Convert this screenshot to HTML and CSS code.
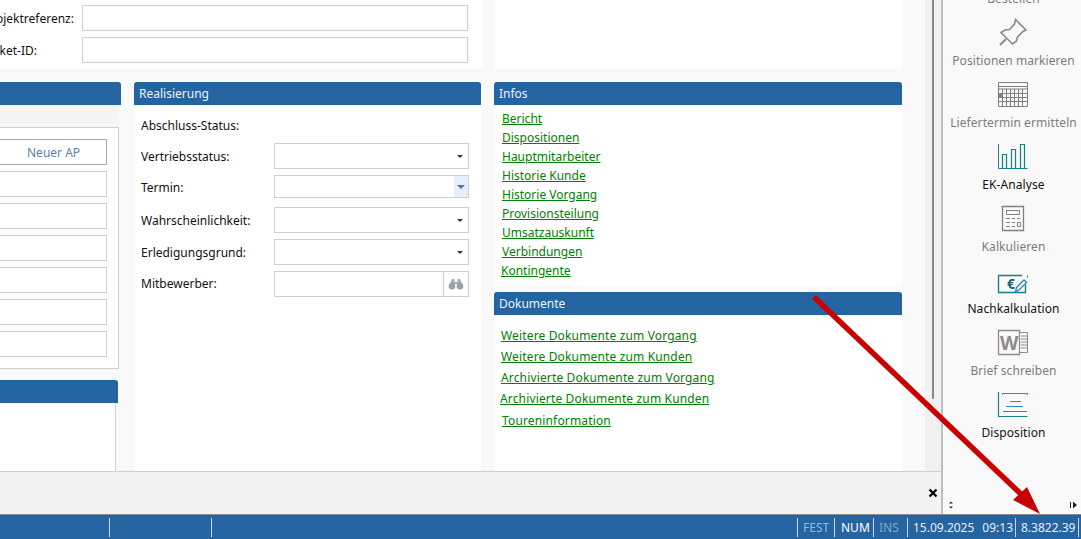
FILE: index.html
```html
<!DOCTYPE html>
<html>
<head>
<meta http-equiv="Content-Type" content="text/html; charset=utf-8" />
  <title>Vorgang</title>
  <link rel="stylesheet" href="styles.css">
</head>
<body>
<div class="app">
  <div class="workspace">
    <div class="main">
      <div class="content">
        <div class="scroll-area">
          <div class="top-row">
            <div class="card top-left">
              <div class="top-field"><span class="top-label">Projektreferenz:</span><input class="field"></div>
              <div class="top-field"><span class="top-label">Ticket-ID:</span><input class="field"></div>
            </div>
            <div class="card top-right"></div>
          </div>
          <div class="panel-row">
            <div class="col-left">
              <div class="panel-head"></div>
              <div class="tabstrip"></div>
              <div class="tabbox">
                <button class="new-btn">Neuer AP</button>
                <input class="field">
                <input class="field">
                <input class="field">
                <input class="field">
                <input class="field">
                <input class="field">
              </div>
              <div class="panel-head second"></div>
              <div class="list-box"></div>
            </div>

            <div class="card col-mid">
              <div class="panel-head">Realisierung</div>
              <div class="form">
                <div class="form-row status-row"><span>Abschluss-Status:</span></div>
                <div class="form-row">
                  <span>Vertriebsstatus:</span>
                  <div class="select"><i class="caret"></i></div>
                </div>
                <div class="form-row termin-row">
                  <span>Termin:</span>
                  <div class="select termin"><b class="termin-btn"><i class="caret blue"></i></b></div>
                </div>
                <div class="form-row">
                  <span>Wahrscheinlichkeit:</span>
                  <div class="select"><i class="caret"></i></div>
                </div>
                <div class="form-row">
                  <span>Erledigungsgrund:</span>
                  <div class="select"><i class="caret"></i></div>
                </div>
                <div class="form-row mitbewerber-row">
                  <span>Mitbewerber:</span>
                  <div class="select search">
                    <b class="search-btn">
                      <svg width="16" height="12" viewBox="0 0 16 12"><path d="M4 1h2.500v3h3V1H12l3 7H9.500V6h-3v2H1z" fill="#aaa"/><circle cx="4" cy="8.300" r="3.300" fill="#98a2a8"/><circle cx="12" cy="8.300" r="3.300" fill="#98a2a8"/></svg>
                    </b>
                  </div>
                </div>
              </div>
            </div>

            <div class="col-right">
              <div class="card infos">
                <div class="panel-head">Infos</div>
                <div class="links">
                  <a href="#">Bericht</a>
                  <a href="#">Dispositionen</a>
                  <a href="#">Hauptmitarbeiter</a>
                  <a href="#">Historie Kunde</a>
                  <a href="#">Historie Vorgang</a>
                  <a href="#">Provisionsteilung</a>
                  <a href="#">Umsatzauskunft</a>
                  <a href="#">Verbindungen</a>
                  <a href="#" class="shift">Kontingente</a>
                </div>
              </div>
              <div class="card docs">
                <div class="panel-head">Dokumente</div>
                <div class="links doc-links">
                  <a href="#">Weitere Dokumente zum Vorgang</a>
                  <a href="#">Weitere Dokumente zum Kunden</a>
                  <a href="#">Archivierte Dokumente zum Vorgang</a>
                  <a href="#" class="shift">Archivierte Dokumente zum Kunden</a>
                  <a href="#" class="last">Toureninformation</a>
                </div>
              </div>
            </div>
          </div>
        </div>
        <div class="scrollbar"><div class="thumb"></div></div>
      </div>
      <div class="bottom-bar">
        <svg class="close" width="10" height="10" viewBox="0 0 10 10"><path d="M1.500 1.500l7 7M8.500 1.500l-7 7" stroke="#000" stroke-width="2.200" fill="none"/></svg>
      </div>
    </div>

    <div class="sidebar">
      <div class="side-list">
        <div class="side-item off">
          <svg width="32" height="32" viewBox="0 0 32 32"></svg>
          <span>Bestellen</span>
        </div>
        <div class="side-item off">
          <svg width="32" height="32" viewBox="0 0 32 32" fill="none" stroke="#8a8a8a" stroke-width="1.600"><path d="M18.500 3.500L29 14l-3 1.500-5.500 5.500-1 4-4 3L4 16.500 8 14l4.500-.5 5-5.500z"/><path d="M9 23l-6 6" stroke-width="2"/></svg>
          <span>Positionen markieren</span>
        </div>
        <div class="side-item off">
          <svg width="32" height="32" viewBox="0 0 32 32" fill="none" stroke="#808080"><path d="M1.500 4.500h29v24h-29zM1.500 8.500h29M1.500 11h29" stroke-width="1"/><path d="M5.500 11v17M9.500 11v17M13.500 11v17M17.500 11v17M21.500 11v17M25.500 11v17M1.500 15.500h29M1.500 19.500h29M1.500 23.500h29" stroke-width="1"/><rect x="2" y="16" width="3" height="3" fill="#808080" stroke="none"/></svg>
          <span>Liefertermin ermitteln</span>
        </div>
        <div class="side-item">
          <svg width="32" height="32" viewBox="0 0 32 32" fill="none" stroke="#1b7f86"><path d="M1.500 4v24.500h29" stroke-width="1"/><path d="M5.500 28V14.500h4V28M14.500 28V9.500h4V28M23.500 28V4.500h4V28" stroke-width="1.200"/></svg>
          <span>EK-Analyse</span>
        </div>
        <div class="side-item off">
          <svg width="32" height="32" viewBox="0 0 32 32" fill="none" stroke="#808080"><path d="M5.500 4.500h21v24h-21z" stroke-width="1.300"/><path d="M9.500 8.500h13v4h-13z"/><path d="M9 16.500h4M15 16.500h3M20 16.500h3M9 20.500h4M15 20.500h3M9 24.500h4M15 24.500h3"/><path d="M20.500 20.500h3v4h-3z"/></svg>
          <span>Kalkulieren</span>
        </div>
        <div class="side-item">
          <svg width="32" height="32" viewBox="0 0 32 32" fill="none"><path d="M25 11.500H1.500v17h27v-8" stroke="#1b7f86" stroke-width="1.400"/><path d="M30.500 11.500v2" stroke="#1b7f86"/><text class="euro" x="10" y="24.500">€</text><path d="M18.500 27.500l1-4L27 16l2.500 2.500-7.500 7.500z" fill="#fff" stroke="#2a7db5" stroke-width="1.300"/></svg>
          <span>Nachkalkulation</span>
        </div>
        <div class="side-item off">
          <svg width="32" height="32" viewBox="0 0 32 32" fill="none" stroke="#8c8c8c"><path d="M1.500 4.500h21v24h-21z" stroke-width="1.300"/><path d="M23 6.500h7.500v20H23M24 10h6M24 13h6M24 16h6M24 19h6M24 22h6"/><text class="word-w" x="3" y="24">W</text></svg>
          <span>Brief schreiben</span>
        </div>
        <div class="side-item">
          <svg width="32" height="32" viewBox="0 0 32 32" fill="none"><path d="M1.500 4v24.500h29" stroke="#1b7f86" stroke-width="1.200"/><path d="M5.500 7V5.500h25V7M13 13.500h11M9 18.500h17M6 23.500h24" stroke="#2a8cc0"/></svg>
          <span>Disposition</span>
        </div>
      </div>
      <div class="side-arrows">
        <svg width="6" height="8" viewBox="0 0 6 8"><path d="M1 2.500h4L3 .5zM1 5.500h4L3 7.500z" fill="#222"/></svg>
        <svg width="8" height="8" viewBox="0 0 8 8"><path d="M.500 1v6" stroke="#222"/><path d="M3 .5v7L7 4z" fill="#222"/></svg>
      </div>
    </div>
  </div>

  <div class="statusbar">
    <div class="st-cell st-a"></div>
    <div class="st-cell st-b"></div>
    <div class="st-cell st-grow"></div>
    <div class="st-cell st-fest">FEST</div>
    <div class="st-cell st-num">NUM</div>
    <div class="st-cell st-ins">INS</div>
    <div class="st-cell st-date">15.09.2025<span class="st-time">09:13</span></div>
    <div class="st-cell st-ver">8.3822.39</div>
  </div>
</div>

<svg class="red-arrow" width="1081" height="539" viewBox="0 0 1081 539">
  <path d="M814 297L1024 497" stroke="#c80000" stroke-width="5.500" fill="none"/>
  <path d="M1040 514L1013 500 1027 487z" fill="#c80000"/>
</svg>
</body>
</html>
```

FILE: styles.css
```css
* {
  box-sizing: border-box;
  margin: 0;
  padding: 0;
}

body {
  width: 1081px;
  height: 539px;
  overflow: hidden;
  position: relative;
  background-color: #f9f9f9;
  font-family: "Noto Sans", "Open Sans", sans-serif;
  font-size: 12px;
  color: #111;
}

.app {
  display: flex;
  flex-direction: column;
  height: 539px;
}

.workspace {
  display: flex;
  height: 515px;
  border-bottom: 1px solid #8a8a8a;
}

.main {
  display: flex;
  flex-direction: column;
  width: 943px;
  border-right: 2px solid #bdbdbd;
}

.content {
  display: flex;
  height: 471px;
  overflow: hidden;
}

.scroll-area {
  flex: none;
  width: 945px;
  margin-left: -20px;
}

.scrollbar {
  flex: 1;
  background-color: #f0f0f0;
}

.thumb {
  width: 2px;
  height: 399px;
  margin-left: 7px;
  background-color: #8a8a8a;
}

.top-row {
  display: flex;
  gap: 11px;
  height: 69px;
}

.card {
  background-color: #fff;
  border-radius: 3px;
}

.top-left {
  width: 503px;
  padding: 5px 15px 0 4px;
}

.top-right {
  width: 408px;
}

.top-field {
  display: flex;
  align-items: center;
  height: 26px;
  margin-bottom: 6px;
}

.top-label {
  width: 98px;
  flex: none;
}

.field {
  display: block;
  flex: none;
  height: 26px;
  width: 386px;
  border: 1px solid #d0d0d0;
  background-color: #fff;
  outline: none;
}

.tabbox .field {
  width: 100%;
  border-left: none;
}

.panel-row {
  display: flex;
  gap: 13px;
  height: 389px;
  margin-top: 13px;
}

.panel-head {
  height: 23px;
  line-height: 23px;
  padding-left: 5px;
  background-color: #2464a0;
  color: #eef3f8;
  border-radius: 3px 3px 0 0;
}

.col-left {
  width: 141px;
  flex: none;
}

.tabstrip {
  height: 22px;
  margin-right: 2px;
  background-color: #f5f5f5;
}

.tabbox {
  display: flex;
  flex-direction: column;
  gap: 6px;
  height: 242px;
  margin-right: 2px;
  padding: 11px 11px 0 0;
  background-color: #fff;
  border: 1px solid #d0d0d0;
  border-left: none;
}

.new-btn {
  height: 26px;
  padding-left: 47px;
  font: inherit;
  color: #5a7fa8;
  text-align: left;
  white-space: nowrap;
  background-color: #fff;
  border: 1px solid #a8a8a8;
  border-left: none;
}

.second {
  margin-top: 11px;
  margin-right: 3px;
}

.list-box {
  height: 68px;
  margin-right: 5px;
  background-color: #fff;
  border-right: 1px solid #d0d0d0;
}

.col-mid {
  width: 347px;
  flex: none;
}

.form {
  padding: 0 12px 0 7px;
}

.form-row {
  display: flex;
  align-items: center;
  justify-content: space-between;
  height: 26px;
  margin-top: 6px;
}

.status-row {
  height: 25px;
  margin-top: 7px;
  padding-top: 2px;
}

.termin-row {
  height: 23px;
  margin-bottom: 9px;
}

.termin-row span {
  padding-top: 2px;
}

.mitbewerber-row span {
  padding-bottom: 2px;
}

.select {
  position: relative;
  display: flex;
  justify-content: flex-end;
  align-items: center;
  width: 195px;
  height: 100%;
  padding-right: 5px;
  background-color: #fff;
  border: 1px solid #d0d0d0;
}

.caret {
  display: block;
  width: 0;
  height: 0;
  border-left: 3px solid transparent;
  border-right: 3px solid transparent;
  border-top: 3px solid #333;
}

.caret.blue {
  border-left-width: 4px;
  border-right-width: 4px;
  border-top: 4px solid #4f78b0;
}

.termin {
  padding-right: 0;
}

.termin-btn {
  display: flex;
  justify-content: center;
  align-items: center;
  width: 14px;
  height: 100%;
  background-color: #e6eef8;
}

.search {
  padding-right: 0;
}

.search-btn {
  display: flex;
  justify-content: center;
  align-items: center;
  width: 25px;
  height: 100%;
  border-left: 1px solid #d0d0d0;
}

.col-right {
  display: flex;
  flex-direction: column;
  gap: 5px;
  width: 408px;
  flex: none;
}

.infos {
  height: 205px;
}

.docs {
  flex: 1;
}

.links {
  display: flex;
  flex-direction: column;
  align-items: flex-start;
  padding: 4px 0 0 8px;
}

.links a {
  color: #008000;
  line-height: 19px;
  text-decoration: underline;
}

.links .shift {
  margin-left: -1px;
}

.doc-links {
  padding: 10px 0 0 7px;
}

.doc-links a {
  line-height: 21px;
  letter-spacing: 0.150px;
}

.doc-links .last {
  margin-left: 1px;
  margin-top: 1px;
}

.bottom-bar {
  display: flex;
  justify-content: flex-end;
  align-items: center;
  flex: 1;
  padding: 0 3px 0 0;
  background-color: #f3f3f3;
  border-top: 1px solid #d0d0d0;
}

.sidebar {
  position: relative;
  flex: 1;
  overflow: hidden;
  background-color: #f9f9f9;
}

.side-list {
  margin-top: -52px;
}

.side-item {
  display: flex;
  flex-direction: column;
  align-items: center;
  height: 62px;
  padding-top: 6px;
  margin-left: 2px;
  color: #111;
}

.side-item.off {
  color: #7c7c7c;
}

.side-item span {
  margin-top: 4px;
  margin-left: 1px;
  line-height: 18px;
  letter-spacing: 0.080px;
  white-space: nowrap;
}

.euro {
  font-size: 14px;
  font-weight: 700;
  fill: #1b5f70;
  stroke: none;
}

.word-w {
  font-size: 19px;
  font-weight: 700;
  fill: #8c8c8c;
  stroke: none;
}

.side-arrows {
  position: absolute;
  left: 5px;
  right: 3px;
  bottom: 5px;
  display: flex;
  justify-content: space-between;
  align-items: center;
}

.statusbar {
  display: flex;
  align-items: center;
  flex: 1;
  background-color: #2464a0;
  color: #e8eef5;
}

.st-cell {
  height: 19px;
  line-height: 19px;
  flex: none;
  border-right: 1px solid #c8d6e4;
}

.st-a {
  width: 110px;
}

.st-b {
  width: 102px;
}

.st-grow {
  flex: 1;
}

.st-fest {
  width: 37px;
  padding-left: 5px;
  color: #9db4cc;
}

.st-num {
  width: 39px;
  padding-left: 6px;
  color: #fff;
}

.st-ins {
  width: 34px;
  padding-left: 5px;
  color: #8aa5c2;
}

.st-date {
  width: 108px;
  padding-left: 5px;
}

.st-time {
  margin-left: 8px;
}

.st-ver {
  width: 63px;
  padding-left: 5px;
  margin-right: 2px;
}

.red-arrow {
  position: absolute;
  left: 0;
  top: 0;
  pointer-events: none;
}
```
